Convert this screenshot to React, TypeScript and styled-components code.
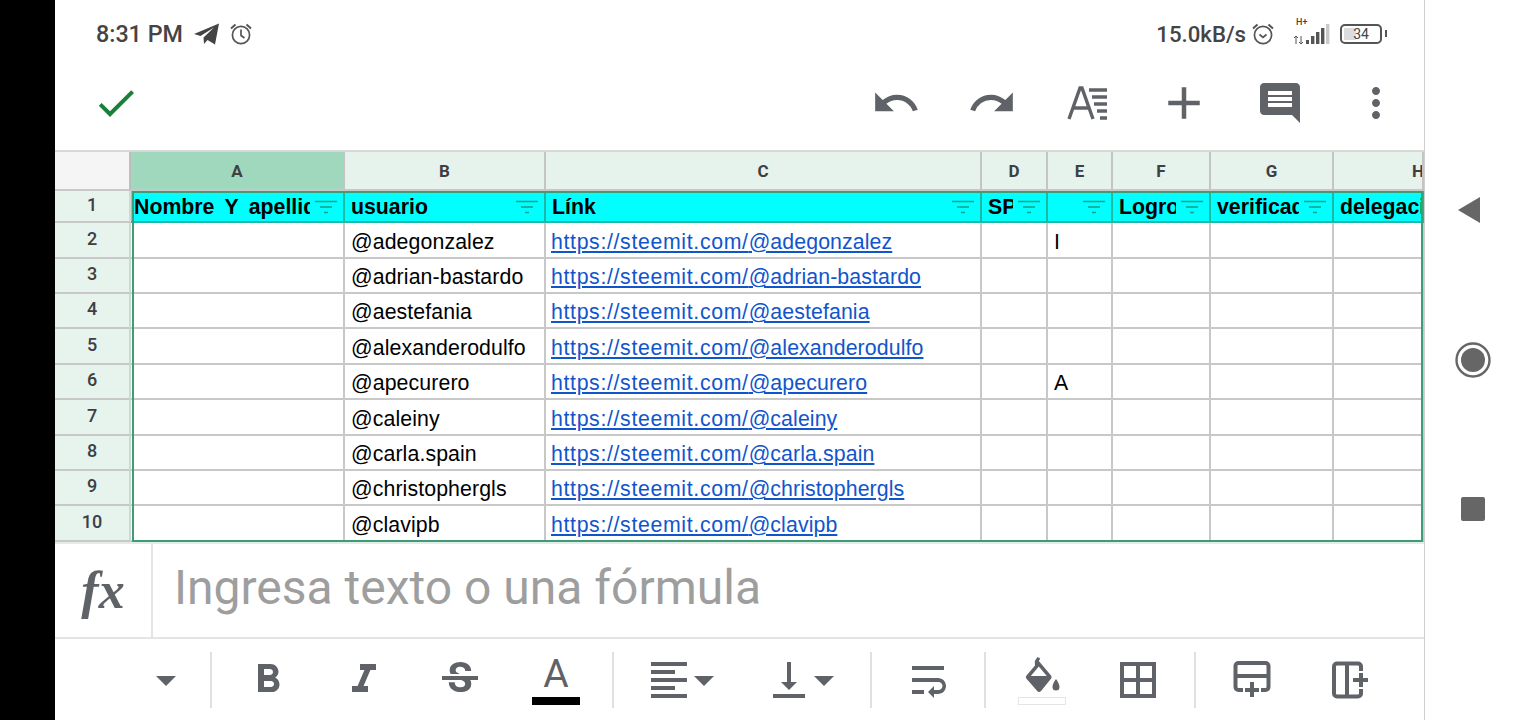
import styled, { createGlobalStyle } from 'styled-components';
import {
  MdAdd,
  MdArrowDropDown,
  MdBorderAll,
  MdCheck,
  MdComment,
  MdFormatAlignLeft,
  MdFormatBold,
  MdFormatItalic,
  MdMoreVert,
  MdRedo,
  MdStrikethroughS,
  MdUndo,
  MdVerticalAlignBottom,
  MdWrapText,
} from 'react-icons/md';

const ICON = '#5f6368';
const LINE = '#c8c8c8';

const columns = ['A', 'B', 'C', 'D', 'E', 'F', 'G', 'H'];
const headers = ['Nombre Y apellidos', 'usuario', 'Línk', 'SP', '', 'Logros', 'verificado', 'delegacion'];
const users = [
  '@adegonzalez',
  '@adrian-bastardo',
  '@aestefania',
  '@alexanderodulfo',
  '@apecurero',
  '@caleiny',
  '@carla.spain',
  '@christophergls',
  '@clavipb',
];
const marks: Record<number, string> = { 0: 'I', 4: 'A' };

function AlarmIcon({ check }: { check?: boolean }) {
  return (
    <svg width="24" height="24" viewBox="0 0 24 24" fill="none" stroke="#555" strokeWidth="1.7">
      <circle cx="12" cy="13" r="8.6" />
      {check ? <path d="M8.5 12.5l3.5 3 3.5-3" /> : <path d="M12 7.5V13.5l3.5 2.5" />}
      <path d="M2 6.5L6.5 2.5M22 6.5L17.5 2.5" strokeWidth="2" />
    </svg>
  );
}

function SignalIcon() {
  return (
    <SignalWrap>
      <SignalLabel>H+</SignalLabel>
      <svg width="40" height="24" viewBox="0 0 40 24">
        <path d="M3 13v8M1 15l2-2 2 2M8 21v-8M6 19l2 2 2-2" stroke="#555" strokeWidth="1" fill="none" />
        <rect x="13" y="17" width="3" height="4" fill="#555" />
        <rect x="18" y="13" width="3.4" height="8" fill="#555" />
        <rect x="23" y="9" width="3.4" height="12" fill="#555" />
        <rect x="28" y="5" width="3.4" height="16" fill="#555" />
        <rect x="33" y="1" width="3.4" height="20" fill="#c9c9c9" />
      </svg>
    </SignalWrap>
  );
}

function TextFormatIcon() {
  return (
    <svg width="42" height="34" viewBox="0 0 42 34" fill="none" stroke={ICON}>
      <path d="M2 33L13 2h2l11 31M6.500 22h17" strokeWidth="3.400" />
      <path d="M22 4h18M25 11h15M27 18h13M30 25h10M33 32h7" strokeWidth="3.400" />
    </svg>
  );
}

function InsertRowIcon() {
  return (
    <svg width="38" height="38" viewBox="0 0 38 38" fill="none" stroke={ICON} strokeWidth="4">
      <path d="M10 29H5.500a3 3 0 0 1-3-3V5a3 3 0 0 1 3-3h27a3 3 0 0 1 3 3v21a3 3 0 0 1-3 3H28" />
      <path d="M3 15h32M19 21v15M12 29h14" />
    </svg>
  );
}

function InsertColumnIcon() {
  return (
    <svg width="38" height="38" viewBox="0 0 38 38" fill="none" stroke={ICON} strokeWidth="4">
      <path d="M29 10V5.500a3 3 0 0 0-3-3H5a3 3 0 0 0-3 3v27a3 3 0 0 0 3 3h21a3 3 0 0 0 3-3V28" />
      <path d="M15 3v32M21 19h15M29 12v14" />
    </svg>
  );
}

function FillBucketIcon() {
  return (
    <svg width="44" height="36" viewBox="0 0 44 36" fill={ICON}>
      <path
        fillRule="evenodd"
        d="M17.500 0l2.800 1.500-1.500 2.500 12.200 14.500c.8 1 .8 2.300 0 3.300L21 34c-1 1.200-2.800 1.200-3.800 0L6.500 21.800c-.8-1-.8-2.300 0-3.300L15 8.500 14.800 4zM18.800 9.500L10.800 19h16z"
      />
      <path d="M36 22s-3.500 4.500-3.500 8a3.500 3.500 0 0 0 7 0C39.500 26.500 36 22 36 22z" />
    </svg>
  );
}

function FilterIcon() {
  return (
    <svg width="22" height="14" viewBox="0 0 22 14" stroke="#1a9e86" strokeWidth="1.600">
      <path d="M0 1.500h22M5 7h12M9 12.500h4" />
    </svg>
  );
}

export default function App() {
  return (
    <Page>
      <GlobalStyle />
      <Bezel />
      <Phone>
        <StatusBar>
          <StatusGroup>
            <Clock>8:31 PM</Clock>
            <svg width="26" height="22" viewBox="0 0 26 22" fill="#444">
              <path d="M0 11L25 0.500 21 21.500 13.500 17 10 21 9.500 14.500 20 4.500 6.500 13z" />
            </svg>
            <AlarmIcon />
          </StatusGroup>
          <StatusGroup>
            <NetSpeed>15.0kB/s</NetSpeed>
            <AlarmIcon check />
            <SignalIcon />
            <Battery>
              <BatteryFill />
              <BatteryText>34</BatteryText>
              <BatteryNub />
            </Battery>
          </StatusGroup>
        </StatusBar>

        <ActionBar>
          <DoneButton>
            <MdCheck size={48} color="#188038" />
          </DoneButton>
          <ActionButton><MdUndo size={50} /></ActionButton>
          <ActionButton><MdRedo size={50} /></ActionButton>
          <ActionButton><TextFormatIcon /></ActionButton>
          <ActionButton><MdAdd size={54} /></ActionButton>
          <ActionButton><MdComment size={48} /></ActionButton>
          <ActionButton><MdMoreVert size={48} /></ActionButton>
        </ActionBar>

        <Sheet>
          <Corner />
          {columns.map((c, i) => (
            <ColHead key={c} $active={i === 0} $clipped={c === 'H'}>{c}</ColHead>
          ))}

          <RowHead>1</RowHead>
          {headers.map((h, i) => (
            <TitleCell key={i} $first={i === 0} $last={i === 7}>
              <TitleText>{h}</TitleText>
              {i < 7 && <FilterIcon />}
            </TitleCell>
          ))}

          {users.map((user, r) => (
            <Row key={user}>
              <RowHead>{r + 2}</RowHead>
              <Cell />
              <Cell>{user}</Cell>
              <Cell>
                <SheetLink href="#">
                  <LinkHost>https://steemit.com/</LinkHost>
                  {user}
                </SheetLink>
              </Cell>
              <Cell />
              <Cell>{marks[r]}</Cell>
              <Cell />
              <Cell />
              <Cell />
            </Row>
          ))}

          <Selection />
        </Sheet>

        <FormulaBar>
          <FxBox>fx</FxBox>
          <FormulaInput>Ingresa texto o una fórmula</FormulaInput>
        </FormulaBar>

        <FormatBar>
          <FormatButton $w={72}><MdArrowDropDown size={48} /></FormatButton>
          <Separator />
          <FormatButton><MdFormatBold size={48} /></FormatButton>
          <FormatButton><MdFormatItalic size={48} /></FormatButton>
          <FormatButton><MdStrikethroughS size={48} /></FormatButton>
          <FormatButton>
            <LetterA>A</LetterA>
            <ColorBar />
          </FormatButton>
          <Separator />
          <FormatButton $w={122} $shift={7}>
            <MdFormatAlignLeft size={48} />
            <CaretRight><MdArrowDropDown size={48} /></CaretRight>
          </FormatButton>
          <FormatButton $w={118} $shift={7}>
            <MdVerticalAlignBottom size={48} />
            <CaretRight><MdArrowDropDown size={48} /></CaretRight>
          </FormatButton>
          <Separator />
          <FormatButton><MdWrapText size={48} /></FormatButton>
          <Separator />
          <FormatButton>
            <FillIcon><FillBucketIcon /></FillIcon>
            <FillSwatch />
          </FormatButton>
          <FormatButton><MdBorderAll size={48} /></FormatButton>
          <Separator />
          <FormatButton><InsertRowIcon /></FormatButton>
          <FormatButton $shift={6}><InsertColumnIcon /></FormatButton>
        </FormatBar>
      </Phone>

      <NavBar>
        <svg width="24" height="26" viewBox="0 0 24 26" fill="#666" style={{ marginRight: 5 }}>
          <path d="M0 13L22 0v26z" />
        </svg>
        <svg width="36" height="36" viewBox="0 0 36 36" fill="#666">
          <circle cx="18" cy="18" r="16.500" fill="none" stroke="#666" strokeWidth="2.400" />
          <circle cx="18" cy="18" r="12" />
        </svg>
        <NavSquare />
      </NavBar>
    </Page>
  );
}

const GlobalStyle = createGlobalStyle`
  html, body {
    margin: 0;
    padding: 0;
    background: #fff;
    overflow: hidden;
  }
  * {
    box-sizing: border-box;
  }
`;

const Page = styled.div`
  display: flex;
  width: 1520px;
  height: 720px;
  background: #fff;
  font-family: 'Roboto', 'Liberation Sans', sans-serif;
`;

const Bezel = styled.div`
  width: 55px;
  background: #000;
`;

const Phone = styled.div`
  display: flex;
  flex-direction: column;
  width: 1370px;
  border-right: 1px solid #cfcfcf;
`;

const StatusBar = styled.div`
  display: flex;
  align-items: center;
  justify-content: space-between;
  height: 68px;
  padding: 0 37px 0 41px;
  color: #444;
`;

const StatusGroup = styled.div`
  display: flex;
  align-items: center;
  gap: 9px;
`;

const Clock = styled.span`
  margin-right: 2px;
  font-size: 23.300px;
  font-weight: 500;
`;

const NetSpeed = styled.span`
  margin-right: -4px;
  font-size: 22.200px;
  font-weight: 500;
`;

const SignalWrap = styled.div`
  position: relative;
  display: flex;
  margin-left: 9px;
  margin-top: 2px;
`;

const SignalLabel = styled.span`
  position: absolute;
  top: -6px;
  left: 3px;
  font-size: 9px;
  font-weight: 500;
  line-height: 10px;
`;

const Battery = styled.div`
  position: relative;
  display: flex;
  align-items: center;
  justify-content: center;
  width: 42px;
  height: 20px;
  margin-left: -2px;
  margin-right: 5px;
  border: 2.500px solid #555;
  border-radius: 5px;
`;

const BatteryFill = styled.div`
  position: absolute;
  top: 2px;
  bottom: 2px;
  left: 2px;
  width: 12px;
  background: #dcdcdc;
`;

const BatteryText = styled.span`
  position: relative;
  font-size: 14px;
  line-height: 14px;
`;

const BatteryNub = styled.div`
  position: absolute;
  top: 4px;
  right: -7px;
  width: 2.500px;
  height: 7px;
  background: #555;
`;

const ActionBar = styled.div`
  display: flex;
  align-items: center;
  justify-content: flex-end;
  height: 82px;
  padding-bottom: 12px;
  color: ${ICON};
`;

const DoneButton = styled.div`
  display: flex;
  margin-right: auto;
  margin-left: 37px;
`;

const ActionButton = styled.div`
  display: flex;
  align-items: center;
  justify-content: center;
  width: 96px;
`;

const Sheet = styled.div`
  position: relative;
  display: grid;
  grid-template-columns: 76px 214px 201px 436px 66px 65px 98px 123px 90px;
  grid-template-rows: 39px 32px 36px 35px 35px 36px 35px 36px 35px 35px 36px;
  align-content: start;
  height: 394px;
  overflow: hidden;
  background: #e4ece8;
  border-top: 2px solid #d8d8d8;
`;

const Row = styled.div`
  display: contents;
`;

const Corner = styled.div`
  background: #f5f5f5;
  border-right: 2px solid #bdbdbd;
  border-bottom: 2px solid ${LINE};
`;

const ColHead = styled.div<{ $active?: boolean; $clipped?: boolean }>`
  display: flex;
  align-items: center;
  justify-content: ${(p) => (p.$clipped ? 'flex-start' : 'center')};
  padding-left: ${(p) => (p.$clipped ? '78px' : '0')};
  overflow: hidden;
  font-size: 17px;
  font-weight: 700;
  color: #3c4043;
  background: ${(p) => (p.$active ? '#9fd8bd' : '#e6f2ec')};
  border-right: 2px solid #c4c4c4;
  border-bottom: 2px solid ${LINE};
`;

const RowHead = styled.div`
  display: flex;
  align-items: center;
  justify-content: center;
  padding-bottom: 4px;
  font-size: 18px;
  font-weight: 500;
  color: #3c4043;
  background: #e7f3ed;
  border-right: 2px solid #d0d8d4;
  border-bottom: 2px solid ${LINE};
`;

const TitleCell = styled.div<{ $first?: boolean; $last?: boolean }>`
  display: flex;
  align-items: center;
  gap: 5px;
  min-width: 0;
  padding: 2px ${(p) => (p.$last ? '0' : '6px')} 0 ${(p) => (p.$first ? '3px' : '6px')};
  background: #00ffff;
  border-right: 2px solid #1db9a6;
  border-bottom: 2px solid #1db9a6;
`;

const TitleText = styled.span`
  flex: 1;
  min-width: 0;
  overflow: hidden;
  white-space: nowrap;
  font-family: 'Liberation Sans', Arial, sans-serif;
  font-size: 21.300px;
  font-weight: 700;
  word-spacing: 4.500px;
  color: #000;
`;

const Cell = styled.div`
  display: flex;
  align-items: center;
  min-width: 0;
  padding: 4px 5px 0 6px;
  overflow: hidden;
  white-space: nowrap;
  font-family: 'Liberation Sans', Arial, sans-serif;
  font-size: 21.300px;
  letter-spacing: 0.100px;
  color: #000;
  background: #fff;
  border-right: 2px solid ${LINE};
  border-bottom: 2px solid ${LINE};
`;

const SheetLink = styled.a`
  margin-left: -1px;
  color: #1155cc;
  text-decoration: underline;
`;

const LinkHost = styled.span`
  letter-spacing: 0.650px;
`;

const Selection = styled.div`
  grid-column: 2 / -1;
  grid-row: 2 / -1;
  position: absolute;
  inset: 0 1px 0 1px;
  border: 2px solid #3f9c78;
  pointer-events: none;
`;

const FormulaBar = styled.div`
  display: flex;
  height: 95px;
  border-bottom: 2px solid #e4e4e4;
`;

const FxBox = styled.div`
  display: flex;
  align-items: center;
  justify-content: center;
  width: 98px;
  font-family: 'Liberation Serif', 'Times New Roman', serif;
  font-size: 52px;
  font-style: italic;
  font-weight: 700;
  color: ${ICON};
  border-right: 2px solid #e4e4e4;
`;

const FormulaInput = styled.div`
  display: flex;
  align-items: center;
  padding-bottom: 6px;
  padding-left: 21px;
  font-size: 48px;
  color: #9e9e9e;
`;

const FormatBar = styled.div`
  display: flex;
  align-items: center;
  flex: 1;
  padding-left: 75px;
  color: ${ICON};
`;

const FormatButton = styled.div<{ $w?: number; $shift?: number }>`
  position: relative;
  display: flex;
  align-items: center;
  justify-content: center;
  width: ${(p) => p.$w ?? 96}px;
  height: 56px;
  padding-left: ${(p) => p.$shift ?? 0}px;
`;

const Separator = styled.div`
  width: 2px;
  height: 56px;
  margin: 0 8px;
  background: #e0e0e0;
`;

const CaretRight = styled.span`
  display: flex;
  margin-left: -13px;
`;

const LetterA = styled.span`
  margin-top: -12px;
  font-size: 39px;
  line-height: 40px;
`;

const ColorBar = styled.div`
  position: absolute;
  bottom: 3px;
  left: 24px;
  width: 48px;
  height: 8px;
  background: #000;
`;

const FillIcon = styled.span`
  display: flex;
  margin-top: -10px;
`;

const FillSwatch = styled.div`
  position: absolute;
  bottom: 3px;
  left: 24px;
  width: 48px;
  height: 8px;
  border: 1px solid #e4e4e4;
`;

const NavBar = styled.div`
  display: flex;
  flex: 1;
  flex-direction: column;
  align-items: center;
  justify-content: space-between;
  padding: 197px 0 199px;
`;

const NavSquare = styled.div`
  width: 24px;
  height: 24px;
  border-radius: 2px;
  background: #666;
`;
